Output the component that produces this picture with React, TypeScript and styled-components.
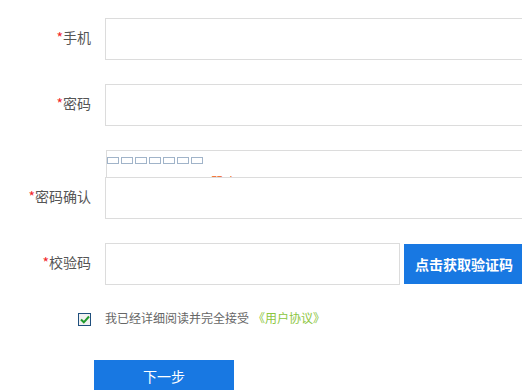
import React from "react";
import styled, { createGlobalStyle } from "styled-components";

const Global = createGlobalStyle`
  html, body { margin: 0; padding: 0; background: #fff; }
  body {
    font-family: "Noto Sans CJK SC", "Noto Sans", sans-serif;
    overflow: hidden;
  }
  * { box-sizing: border-box; }
`;

const Form = styled.form`
  display: flex;
  flex-direction: column;
  padding-top: 18px;
  width: 522px;
  & > * { flex-shrink: 0; }
`;

const Row = styled.div<{ $gap?: number }>`
  display: grid;
  grid-template-columns: 91px auto;
  column-gap: 14px;
  align-items: center;
  margin-bottom: ${(p) => (p.$gap ?? 24)}px;
`;

const Label = styled.label`
  text-align: right;
  font-size: 14px;
  line-height: 20px;
  padding-bottom: 4px;
  color: #555;
  white-space: nowrap;
`;

const Star = styled.span`
  color: #f2262a;
`;

const Field = styled.div`
  display: flex;
  align-items: center;
`;

const Input = styled.input<{ $w?: number }>`
  display: block;
  width: ${(p) => p.$w ?? 430}px;
  height: 42px;
  border: 1px solid #dcdcdc;
  background: #fff;
  padding: 0 10px;
  font-size: 14px;
  outline: none;
`;

const CodeButton = styled.button`
  margin-left: 4px;
  width: 122px;
  height: 40px;
  border: none;
  background: #1878e2;
  color: #fff;
  font-family: inherit;
  font-size: 14px;
  font-weight: bold;
  padding: 0 0 0 11px;
  text-align: left;
  white-space: nowrap;
  cursor: pointer;
`;

const Strength = styled.div`
  margin-left: 106px;
  width: 430px;
  height: 27px;
  border: 1px solid #dcdcdc;
  border-bottom: none;
  overflow: hidden;
  padding-top: 6px;
`;

const Bars = styled.div`
  display: flex;
  gap: 2px;
`;

const Bar = styled.span`
  display: block;
  width: 12px;
  height: 7px;
  border: 1px solid #a1b4c9;
`;

const StrengthText = styled.div`
  margin: 10px 0 0 104px;
  font-size: 12px;
  line-height: 16px;
  color: #f05a0a;
  letter-spacing: 2px;
`;

const AgreeRow = styled.div`
  display: grid;
  grid-template-columns: 91px auto;
  column-gap: 14px;
  align-items: center;
  height: 24px;
  margin-top: 22px;
  margin-bottom: 29px;
`;

const CheckCell = styled.div`
  display: flex;
  justify-content: flex-end;
`;

const CheckBox = styled.span`
  display: flex;
  align-items: center;
  justify-content: center;
  width: 13px;
  height: 13px;
  border: 1px solid #1f4f7d;
  background: #f1f1f1;
`;

const AgreeText = styled.span`
  font-size: 12px;
  line-height: 16px;
  padding-bottom: 2px;
  color: #666;
  white-space: nowrap;
`;

const Link = styled.a`
  color: #8cc63e;
  text-decoration: none;
  margin-left: 4px;
`;

const NextButton = styled.button`
  margin-left: 94px;
  width: 140px;
  height: 36px;
  border: none;
  background: #1878e2;
  color: #fff;
  font-family: inherit;
  font-size: 14px;
  line-height: 20px;
  padding: 0 0 4px;
  cursor: pointer;
`;

export default function App() {
  return (
    <>
      <Global />
      <Form onSubmit={(e) => e.preventDefault()}>
        <Row>
          <Label><Star>*</Star>手机</Label>
          <Field><Input /></Field>
        </Row>
        <Row>
          <Label><Star>*</Star>密码</Label>
          <Field><Input type="password" /></Field>
        </Row>
        <Strength>
          <Bars>
            {Array.from({ length: 7 }).map((_, i) => (
              <Bar key={i} />
            ))}
          </Bars>
          <StrengthText>弱中强</StrengthText>
        </Strength>
        <Row>
          <Label><Star>*</Star>密码确认</Label>
          <Field><Input type="password" /></Field>
        </Row>
        <Row $gap={0}>
          <Label><Star>*</Star>校验码</Label>
          <Field>
            <Input $w={295} />
            <CodeButton type="button">点击获取验证码</CodeButton>
          </Field>
        </Row>
        <AgreeRow>
          <CheckCell>
            <CheckBox>
              <svg width="10" height="9" viewBox="0 0 10 9">
                <path d="M1 4.5 L3.8 7.3 L9 1.5" fill="none" stroke="#1f9a2c" strokeWidth="2" />
              </svg>
            </CheckBox>
          </CheckCell>
          <AgreeText>
            我已经详细阅读并完全接受<Link href="#">《用户协议》</Link>
          </AgreeText>
        </AgreeRow>
        <NextButton type="submit">下一步</NextButton>
      </Form>
    </>
  );
}
